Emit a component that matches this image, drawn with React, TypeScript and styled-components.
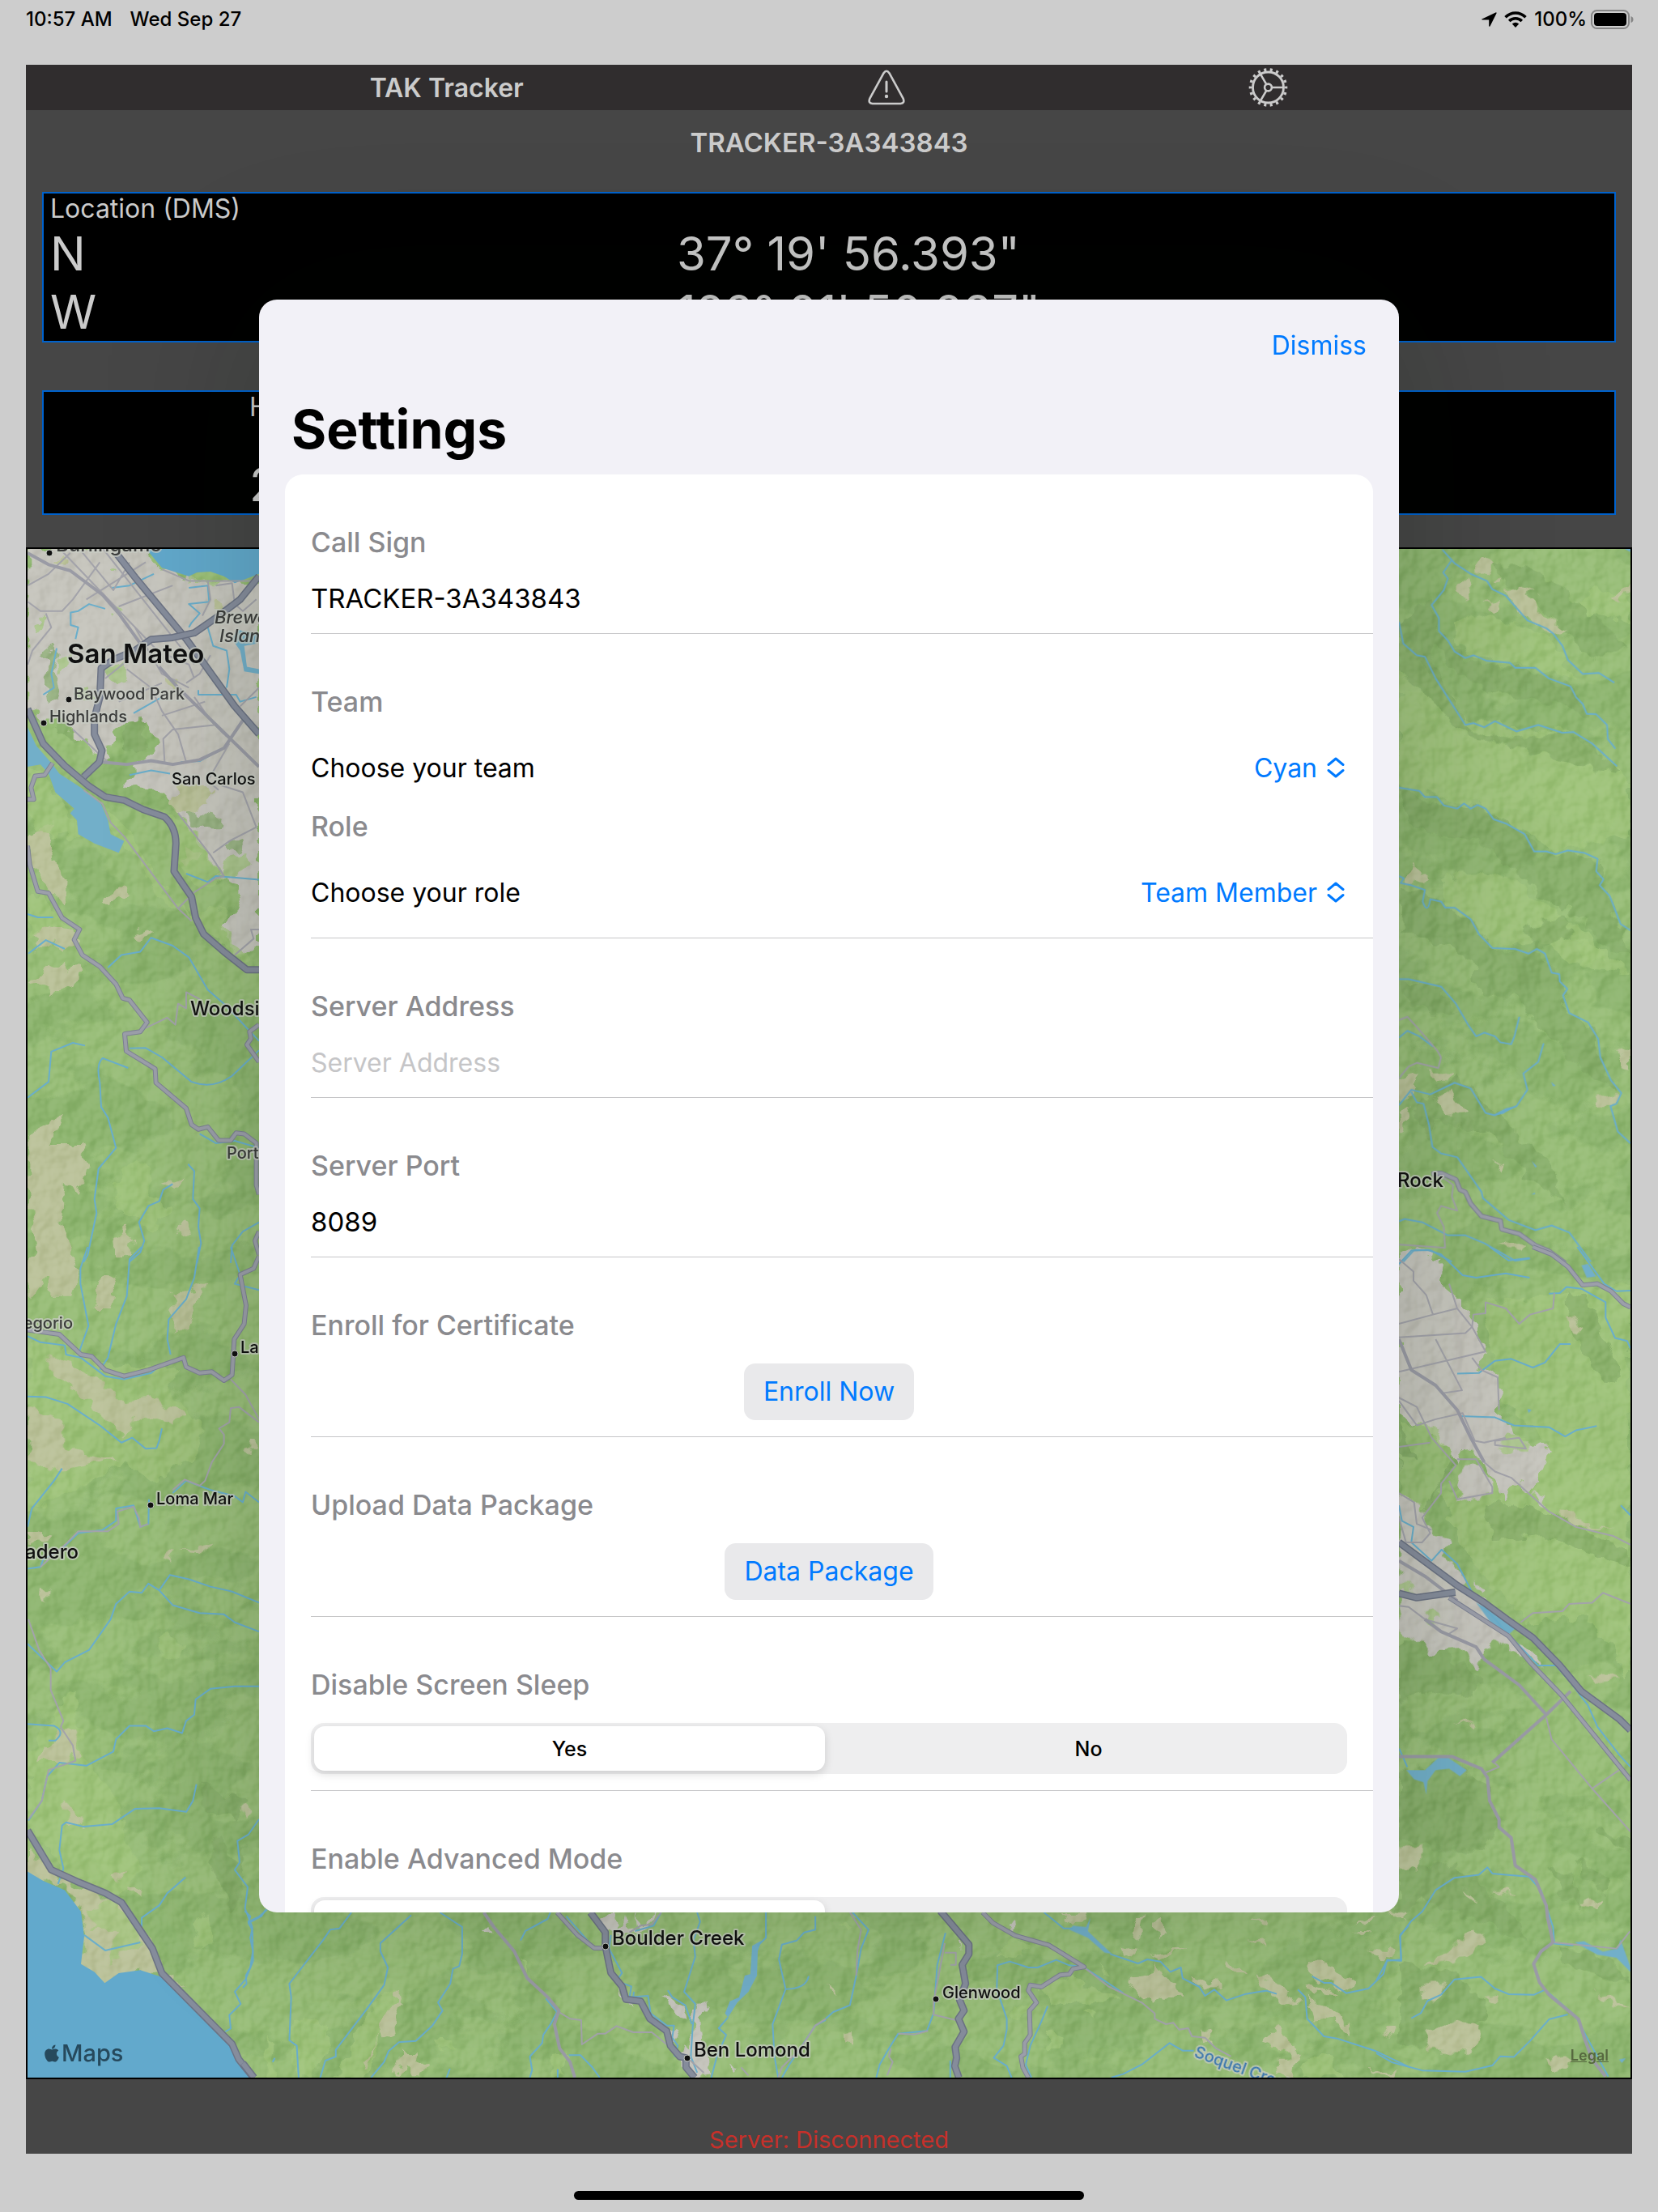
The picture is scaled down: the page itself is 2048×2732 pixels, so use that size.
import React, { useState } from "react";
import styled, { createGlobalStyle } from "styled-components";
import { FaApple } from "react-icons/fa";

const GlobalStyle = createGlobalStyle`
  *, *::before, *::after { box-sizing: border-box; }
  body {
    margin: 0;
    background: #cdcdcd;
    color: #000;
    font-family: Inter, "Liberation Sans", sans-serif;
    font-size: 32px;
  }
  button, input, select { font: inherit; color: inherit; margin: 0; }
`;

const blue = "#007aff";

/* ---------- page frame ---------- */

const Page = styled.div`
  min-height: 100vh;
  display: flex;
  flex-direction: column;
`;

const StatusBar = styled.div`
  display: flex;
  justify-content: space-between;
  align-items: center;
  height: 47px;
  margin-bottom: 33px;
  padding: 0 30px 0 32px;
  font-size: 24px;
  font-weight: 500;
`;

const StatusGroup = styled.div<{ $gap: number }>`
  display: flex;
  align-items: center;
  gap: ${(p) => p.$gap}px;
`;

const Tracker = styled.main`
  flex: 1;
  display: flex;
  flex-direction: column;
  margin: 0 32px;
  background: #464646;
  color: #cbcbcb;
`;

const TitleBar = styled.header`
  display: flex;
  justify-content: space-evenly;
  align-items: center;
  height: 56px;
  background: #302d2e;
`;

const Title = styled.h1`
  margin: 0;
  font-size: 32px;
  font-weight: 600;
`;

const IconButton = styled.button`
  display: flex;
  padding: 0;
  border: 0;
  background: none;
`;

const CallSign = styled.div`
  margin-bottom: 21px;
  line-height: 80px;
  font-size: 33px;
  font-weight: 600;
  text-align: center;
`;

const Panel = styled.section`
  margin: 0 20px;
  border: 2px solid #0062cc;
  background: #000;
`;

const LocationPanel = styled(Panel)`
  padding: 0 8px;
  margin-bottom: 59px;
`;

const StatsPanel = styled(Panel)`
  display: flex;
  justify-content: space-between;
  height: 154px;
  padding: 0 254px;
  margin-bottom: 40px;
`;

const PanelLabel = styled.div`
  line-height: 38px;
  font-size: 32px;
`;

const Reading = styled.div`
  line-height: 72px;
  font-size: 58px;
`;

const Coordinates = styled.div`
  display: flex;
`;

const Column = styled.div<{ $centered?: boolean }>`
  display: flex;
  flex-direction: column;
  justify-content: space-between;
  margin: ${(p) => (p.$centered ? "0 auto" : "0")};
  padding-left: ${(p) => (p.$centered ? "16px" : "0")};
`;

const Footer = styled.footer`
  padding-top: 58px;
  line-height: 34px;
  font-size: 29px;
  color: #c6302a;
  text-align: center;
`;

const HomeArea = styled.div`
  display: flex;
  justify-content: center;
  padding: 46px 0 15px;
`;

const HomeIndicator = styled.div`
  width: 630px;
  height: 11px;
  border-radius: 6px;
  background: #000;
`;

/* ---------- map ---------- */

const MapFrame = styled.div`
  position: relative;
  flex: 1;
  min-height: 600px;
  border: 2px solid #000;
  overflow: hidden;
`;

const MapDrawing = styled.svg`
  position: absolute;
  inset: 0;
  width: 100%;
  height: 100%;
`;

const Relief = styled.rect`
  mix-blend-mode: soft-light;
`;

const MapBrand = styled.div`
  position: absolute;
  left: 18px;
  bottom: 12px;
  display: flex;
  align-items: center;
  gap: 0;
  line-height: 36px;
  font-size: 29px;
  font-weight: 500;
  color: #26495c;
`;

const LegalLink = styled.a`
  position: absolute;
  right: 27px;
  bottom: 15px;
  line-height: 24px;
  font-size: 18px;
  font-weight: 600;
  color: #56683f;
`;

type Kind =
  | "urban" | "tan" | "light" | "dark" | "water" | "sea"
  | "stream" | "street" | "road" | "main" | "highway";

const landFills: Partial<Record<Kind, [string, number]>> = {
  urban: ["#c6c5bd", 1],
  tan: ["#bbc29a", 1],
  light: ["#a2c67e", 0.7],
  dark: ["#84aa69", 0.65],
};

const waterFills: Partial<Record<Kind, [string, number]>> = {
  water: ["#72afc9", 1],
  sea: ["#62a9cc", 1],
};

const strokes: Partial<Record<Kind, [string, number][]>> = {
  stream: [["#6aaecb", 2]],
  street: [["#a3a3aa", 2]],
  road: [["#9a9ba5", 4]],
  main: [["#7d8293", 6], ["#9c9faa", 4]],
  highway: [["#6c7384", 9], ["#868d9c", 6]],
};

interface Tile {
  transform: string;
  shapes: [Kind, string][];
}

const tiles: Tile[] = [
  {
    transform: "translate(0 660) scale(.3333 .574)",
    shapes: [
      ["urban", "M100 30H540L600 75L700 95L960 105V880L930 905L870 905L830 850L885 780L840 735L800 740L780 700L700 630L660 600L650 580L600 550L480 545L460 530L560 470L590 450L540 395L470 400L420 420L400 480L360 480L300 440L230 400L160 400L100 370Z"],
      ["tan", "M200 620L105 640L110 700L150 730L190 770L240 800L245 750L200 700L170 660Z"],
      ["tan", "M180 840L120 860L150 890L200 880L240 895L290 880L270 850Z"],
      ["tan", "M300 930L250 940L230 920L110 960L180 975L160 990L220 995L300 950Z"],
      ["tan", "M385 790L420 768L475 756L480 770L440 785L400 800Z"],
      ["tan", "M480 863L540 850L580 858L520 870Z"],
      ["tan", "M103 1290L230 1250L180 1310L300 1310L330 1360L280 1420L240 1390L230 1480L290 1568H150L103 1400Z"],
      ["tan", "M420 1530L460 1490L500 1520L480 1550L430 1555ZM650 1500L690 1475L710 1500L660 1510ZM590 1395L680 1380L660 1410Z"],
      ["tan", "M680 670L740 690L730 710L680 705ZM640 590L660 540L780 545L770 580L700 600Z"],
      ["tan", "M200 60L240 42L256 50L225 66ZM610 310L660 320L650 335L615 325ZM800 145L830 150L820 185L790 175Z"],
      ["light", "M104 500L180 520L200 560L260 600L300 650L190 650L104 620Z"],
      ["light", "M400 590L480 640L620 780L700 820L620 800L470 670L400 620Z"],
      ["light", "M420 1400L500 1350L570 1360L550 1420L640 1450L560 1500L440 1450Z"],
      ["light", "M104 790L140 770L220 825L290 850L180 840L110 870Z"],
      ["light", "M620 600L690 620L760 660L790 710L820 740L740 760L700 740L660 700L650 640Z"],
      ["light", "M700 820L830 800L860 880L940 920L880 910L800 880Z"],
      ["dark", "M195 240L215 250L200 290L230 330L220 360L180 350L170 310L190 290L150 260Z"],
      ["light", "M215 265L255 250L250 290L215 300ZM390 290L470 280L475 300L440 320L390 310ZM270 340L340 330L350 350L280 350Z"],
      ["light", "M155 170L172 175L150 205L140 205ZM402 80L415 75L425 85L410 88ZM430 155L460 165L445 175L425 168Z"],
      ["dark", "M690 600L740 595L830 615L820 640L760 640L700 615ZM840 665L915 660L890 685L850 680Z"],
      ["dark", "M215 395L280 430L300 440L270 445L200 415ZM480 400L540 395L520 440L550 450L500 470L450 440Z"],
      ["light", "M820 700L910 690L920 710L870 740L810 730Z"],
      ["light", "M700 100L720 80L820 78L870 100L800 104Z"],
      ["sea", "M540 30H960V85L870 105L830 90L780 80L730 82L700 90L600 72Z"],
      ["water", "M102 415L135 455L195 495L220 515L300 545L375 580L400 615L410 645L460 660L440 685L350 665L290 645L285 615L260 600L275 590L205 555L180 515L150 495L102 500Z"],
      ["stream", "M700 115L770 110L775 145L700 150L740 170L710 190L700 200M770 200L790 240L840 250L850 290L840 330M735 335V345H875L890 360L950 350"],
      ["water", "M880 205L960 215L950 235L905 240L915 285L960 290V300L905 295L890 250L860 225Z"],
      ["stream", "M210 245L190 300L200 330L160 345M570 85L480 110L415 115M390 160L330 150L290 165L262 168L262 195L290 200L280 225"],
      ["stream", "M480 518L560 508L630 515M690 730L770 748L800 735L960 743M495 385L600 350M670 490L740 488L780 475"],
      ["stream", "M400 932L450 905L520 898L560 868L640 885L700 910L770 980L830 1010L960 1090"],
      ["stream", "M102 817L140 824H197M105 902L170 873L240 892M102 1212L180 1178L190 1113L270 1094L315 1100"],
      ["stream", "M475 1148L380 1127Q355 1140 370 1180L375 1232L400 1255L430 1320L365 1365L350 1430L358 1460L325 1550L310 1566"],
      ["stream", "M480 1106L540 1105L600 1125L710 1178Q790 1195 860 1165L960 1110M740 1290L800 1310L870 1305L960 1320"],
      ["stream", "M640 1398L605 1410L590 1435L550 1445L515 1480L535 1520L520 1545L480 1565M697 1355L720 1370L715 1430L740 1450L735 1490L745 1525L730 1568M960 1480L900 1500L860 1530L855 1568"],
      ["street", "M103 110L180 85L260 40M103 145L150 165H230L270 140L370 60M220 30L600 260M300 35L420 120L480 60M320 140L540 60M380 30L720 280M440 155L640 110M520 100L700 230M103 280L120 250L190 200L170 170M500 200L600 300L700 330"],
      ["street", "M470 290L560 330L600 380L660 430L690 490M390 310L560 230L680 210M720 310L700 280L620 260M610 490L605 440L640 420L800 410L840 435M780 260L740 300L690 320M440 360L600 320M270 420L400 490M600 390L760 360"],
      ["street", "M310 550L380 580L410 620L460 650L660 805L710 832M660 805L720 770L800 740L830 735L780 690L700 630L660 600M810 550L770 530L800 500L850 450M820 540L900 555L950 630L850 660L790 685M870 905L940 870L930 850L960 850"],
      ["street", "M540 1062L620 1040L650 1055L660 1010L690 1020V985L740 1000"],
      ["street", "M800 110L860 105L870 150L900 165L950 140M750 175L780 140L770 100M600 75L700 100H960M890 370L960 330M720 350L780 400L830 430"],
      ["road", "M102 40L180 65L260 78L380 130L440 170L520 235"],
      ["road", "M590 285L660 330L960 500M380 490L470 495L560 487L640 495L740 485L830 460L900 400"],
      ["main", "M102 570H125L115 545L130 520L165 518L195 492"],
      ["highway", "M102 375L160 450L240 498L330 542L390 565L460 572L530 592L610 608Q652 630 652 665L645 725L710 780L725 825L755 860L830 898L915 937H960"],
      ["highway", "M430 40L500 92L690 225L870 370L960 430"],
      ["highway", "M960 90L890 140L800 180L720 212L640 222L560 226L500 250L420 270L375 288L370 350L350 395V430L378 465L368 490L310 522"],
      ["main", "M102 670L110 710L140 768L180 772L230 825L295 850L275 872L305 905L370 930L430 968L455 998L480 1002L545 1050L520 1070L462 1075L468 1112L575 1150L578 1180L690 1235L710 1270L735 1280L770 1275L810 1304H855L875 1288L905 1290L950 1310V1400L960 1420"],
      ["main", "M960 1055L925 1070L930 1085L915 1098L960 1135M960 1500L945 1520L960 1550"],
    ],
  },
  {
    transform: "translate(0 1540) scale(.3333 .7602)",
    shapes: [
      ["tan", "M150 0L260 0L290 40L270 80L180 80L170 50L103 90V30Z"],
      ["tan", "M370 50L440 40L410 100L350 100ZM640 80L760 60L700 130L640 140Z"],
      ["light", "M103 150L500 200L680 190L620 230L760 300L700 350L560 380L460 350L240 400L103 430Z"],
      ["tan", "M180 170L280 190L460 250L560 245L680 275L640 290L500 275L460 310L370 270L300 240L200 210Z"],
      ["tan", "M103 260L220 280L240 330L340 340L430 345L330 355L240 365L103 350Z"],
      ["tan", "M103 460L190 465L150 480L103 478ZM140 550L185 560L180 578L150 570ZM615 490L640 485L630 515L612 510ZM670 492L800 482L740 498Z"],
      ["light", "M103 820L230 740L270 720L310 830L440 900L460 960L520 1010L440 1060L250 1020L103 940Z"],
      ["tan", "M220 780L280 790L300 825L240 835L150 835L160 810L200 810ZM235 895L310 935L250 935ZM480 1030L520 1045L510 1060L475 1040ZM410 1020L460 1015L450 1027Z"],
      ["tan", "M925 310L955 305L950 335L920 325ZM888 905L940 915L920 935Z"],
      ["tan", "M103 980L200 1015L300 1045L450 1065L560 1130L600 1178L700 1200L640 1195L530 1175L440 1180L390 1198L300 1165L310 1080L240 1040L103 1020Z"],
      ["light", "M320 1075L400 1060L520 1100L540 1130L400 1160L450 1110L340 1110Z"],
      ["light", "M580 640L620 625L690 645L660 670L600 665ZM710 1100L770 1080L780 1130L740 1140Z"],
      ["dark", "M900 960L880 1000L800 960L780 1000L860 1080L900 1060ZM740 870L900 900L880 930L760 920Z"],
      ["sea", "M102 1015L160 1030L240 1045L300 1080L312 1120L300 1165L350 1178L388 1196L440 1180L520 1175L610 1188L700 1220L860 1295L890 1330L940 1350H102Z"],
      ["tan", "M850 1290L880 1300L890 1325L870 1315Z"],
      ["stream", "M325 0L298 35V60L328 128L290 175M525 0L480 20L470 80L430 125L400 180L370 200M738 0L720 50L690 85L625 118L620 150L632 175M855 0L890 45L870 60L960 70"],
      ["stream", "M102 145L150 155L240 160L245 175L300 180L390 210L460 215L560 205L600 190"],
      ["stream", "M102 243L170 244L250 255L370 290L450 318L490 310L540 328L580 327L590 315L600 295M102 455L118 425L200 380L230 360"],
      ["stream", "M103 523L150 520L160 508L230 490L290 465L380 460L430 445V425L495 420L520 455L550 450L552 410M640 400L690 380L780 395L870 405L900 415L910 398L960 415"],
      ["stream", "M102 645L210 690L240 675L330 655L410 605L430 580L480 560L525 562L550 547L590 558L630 533L700 540L780 552L860 560L960 578M590 558L640 582L740 595L830 597L870 610L960 625"],
      ["stream", "M102 775L200 778Q245 788 205 802H180M105 932L155 900L175 860L220 838L320 843L420 820L430 800L480 778H540L570 787L620 782L675 790L690 770L720 760L725 735L780 718L870 714H960"],
      ["stream", "M215 1035L235 1010L220 980L230 940L245 935L310 942L415 938L500 913L590 912L690 918L715 900L728 873"],
      ["stream", "M688 1024L620 1050L590 1070L525 1090V1105M312 1118L390 1143L520 1130"],
      ["stream", "M960 930L920 955L880 965L888 1000L870 1012L918 1040L908 1075L935 1105L938 1160L910 1190L870 1210L892 1230L850 1248L855 1270L835 1275M918 1097L960 1088L990 1077"],
      ["street", "M105 605L145 655L188 685V720L235 770L225 780L270 810L280 835L180 850L155 900L105 930M150 520L250 480L290 462L400 462L440 450L435 430L495 422L515 440L520 455L550 450"],
      ["street", "M640 395L685 378L740 388L760 380L785 350L830 320V305L812 295L850 285L855 262L885 260L960 285M855 215L910 240L960 280"],
      ["main", "M102 135L220 142L300 175L340 178L390 200L460 210L550 200L680 180L690 195L740 205L785 203L830 217L860 208L868 150L905 125L912 95L890 45L940 35L960 15"],
      ["highway", "M102 948L190 1012L290 1032L390 1050L450 1065L565 1140L600 1180L860 1295L885 1320L940 1350"],
    ],
  },
  {
    transform: "translate(1700 660) scale(.3333 .574)",
    shapes: [
      ["light", "M84 210L160 270L230 330L330 400L440 400L520 420L700 420L900 500L942 540V650L820 660L640 680L560 640L420 610L380 580L240 570L84 540Z"],
      ["light", "M290 190L380 170L560 200L640 220L740 310L600 290L500 280L380 265L300 240Z"],
      ["light", "M240 740L420 720L560 760L700 830L780 850L850 920L700 930L640 880L430 890L360 830L260 795Z"],
      ["light", "M700 180L860 170L942 200V130L800 120ZM740 870L860 900L940 940L780 930Z"],
      ["dark", "M84 200L150 150L200 150L240 210L330 270L400 275L500 290L600 300L720 330L780 390L700 370L560 350L420 340L300 300L220 240L190 260L300 370L340 420L520 440L700 425L800 450L910 515L760 495L560 465L320 430L200 350L84 290Z"],
      ["dark", "M84 550L240 580L400 590L560 650L600 685L820 700L850 770L942 900L850 890L770 830L620 780L500 720L380 660L140 640Z"],
      ["dark", "M84 760L180 770L270 805L350 830L430 890L620 905L680 950L710 1030L800 1060L850 1150L890 1200L780 1160L600 1060L500 990L380 990L360 920L240 880L100 860Z"],
      ["dark", "M420 60L560 70L700 120L850 200L940 240L800 270L720 220L620 160L480 110Z"],
      ["dark", "M300 1160L420 1230L520 1290L640 1350L700 1440L560 1380L420 1290L220 1260L200 1310L130 1240Z"],
      ["dark", "M84 960L240 975L300 1030L200 1030L84 990ZM540 850L700 820L720 860L600 890Z"],
      ["tan", "M365 75L400 48L430 60L390 82ZM295 120L340 92L355 110L330 140ZM400 150L450 145L465 160L440 172ZM430 95L465 98L460 108Z"],
      ["tan", "M480 120L520 108L600 125L550 130L600 160L660 185L715 200L650 212L580 190L530 165Z"],
      ["tan", "M875 135L942 105V125L900 145ZM112 745L140 705L165 730L200 745L170 755ZM895 1110L942 1100V1150L915 1145Z"],
      ["tan", "M84 1175L140 1162L155 1190L84 1215ZM190 1150L280 1158L240 1180ZM215 1215L275 1200L330 1240L250 1245ZM800 1215L895 1205L880 1230L820 1230ZM84 1250L125 1230L100 1285H84ZM435 1350L470 1355L460 1375ZM455 1530L540 1525L535 1545Z"],
      ["stream", "M245 33L290 62L350 85L410 100L430 118L480 132L560 185L630 202L655 213L690 240L710 270L765 300L825 298L882 319"],
      ["stream", "M280 55L248 82L265 95L250 120L205 152L232 180V208L265 228L290 252L330 266L360 260L410 272L495 276L515 287H590L640 310L720 327L740 350L765 365L780 386L815 387L855 410L858 440L886 461"],
      ["stream", "M84 188L100 235L150 260L180 263L220 310L330 410L360 406L400 415L440 402L520 424L600 410L690 427L730 425L800 450L892 499"],
      ["stream", "M84 545L160 552L180 565H225L250 583L300 590L325 579L350 590L375 582L405 590L435 613L480 622L550 645L585 682H630L665 688L710 680L770 685L820 698L815 725L842 742L828 755L865 778L905 838L942 852"],
      ["stream", "M84 735L102 740L90 750L130 755L180 765L172 790Q190 820 200 785L240 790L255 803H290L350 828L380 860L430 890L515 892L565 902L595 892L625 902L650 943L678 946L680 962L708 978L692 992L715 1030L785 1050L822 1085L830 1125L870 1175L908 1202L890 1225L868 1230L895 1285L942 1310"],
      ["stream", "M84 957H120L240 973L295 1010L340 1055L370 1080L400 1072L440 1080L460 1093L500 1097L512 1080L530 1038M84 1083L115 1068L160 1080L210 1102"],
      ["stream", "M84 1228L130 1195L200 1205L290 1180L350 1192L405 1245L440 1250L520 1230L560 1195L545 1160L600 1135L620 1095"],
      ["stream", "M130 1200L150 1222L175 1225L195 1270L208 1318L240 1332L300 1340L390 1415L395 1428L460 1460L490 1475L590 1497L650 1487L715 1502L795 1565"],
      ["stream", "M84 1478L105 1473L170 1480L265 1508H330L400 1525L515 1563L570 1558M100 1565L140 1540L200 1540L280 1565"],
      ["water", "M430 1250L480 1235L515 1230L470 1247ZM575 1347L595 1360L590 1363ZM575 1420L588 1416V1420ZM648 1178L665 1186L655 1188ZM920 31H942V38Z"],
      ["street", "M84 1045L115 1038L150 1060L225 1110L240 1125L230 1148L150 1137L120 1145L84 1170M205 1375L250 1385L285 1400L280 1425L300 1455L240 1445L225 1460L250 1490L255 1535L84 1528"],
      ["main", "M205 1376L240 1374L295 1388L310 1410L330 1415L350 1440L390 1467L460 1477L465 1495L530 1505L590 1530L640 1542L700 1568"],
    ],
  },
  {
    transform: "translate(1700 1540) scale(.3333 .7602)",
    shapes: [
      ["light", "M400 90L942 60V700L780 600L560 610L330 500L240 400L420 380L600 380L640 320L450 240Z"],
      ["dark", "M84 640L220 640L300 680L400 700L350 730L200 720L84 740ZM84 850L300 840L420 880L460 940L400 980L240 980L84 960Z"],
      ["dark", "M710 70L790 90L840 150L910 210L860 225L780 180L720 130Z"],
      ["dark", "M84 1010L300 1000L500 1080L560 1130L360 1090L160 1060L84 1090ZM670 1140L800 1140L940 1190L850 1190L700 1165Z"],
      ["dark", "M650 1005L740 1030L760 1070L700 1060ZM740 990L860 1030L850 1050L760 1020ZM820 945L942 965V980L820 955ZM84 1160L300 1180L420 1240L320 1290L84 1300Z"],
      ["dark", "M84 290L200 300L300 350L240 390L180 430L84 400ZM400 410L640 430L942 500L940 520L620 470L420 480Z"],
      ["urban", "M84 10L130 0L250 20L240 60L330 95L390 160L420 170L370 190L460 205L455 280L500 285L510 310L650 325L600 380L570 395L520 385L470 410L420 360L350 330L320 320L300 350L200 300L84 270Z"],
      ["light", "M84 285L200 290L280 340L240 380L170 430L84 400L90 340L160 345L120 320Z"],
      ["urban", "M84 400L150 415L200 460L280 480L240 500L310 530L350 560L420 590L480 620L500 635L600 670L640 690L560 670L440 640L390 660L370 680L300 655L210 660L150 640L84 630ZM340 350L420 370L430 400L310 415L300 390ZM575 400L640 405L630 418ZM360 540L410 555L390 565Z"],
      ["light", "M480 310H555V330H440ZM170 600L205 590L240 600L210 612ZM84 545L130 545L140 560L84 560Z"],
      ["tan", "M660 430L710 425L800 455L885 460L780 460L700 445ZM705 110L765 128L750 140L720 135ZM780 700L860 695L920 702L840 706ZM84 975L165 975L160 1015L84 1010ZM290 768L370 775L350 780Z"],
      ["tan", "M180 1165L370 1110L410 1130L330 1155L220 1165ZM172 1195L250 1195L240 1215L175 1230ZM180 1280L310 1255L390 1270L350 1310L200 1305ZM400 1220L460 1215L430 1232ZM320 1040L380 1060L340 1058ZM430 1048L510 1045L480 1055ZM750 1065L830 1060L820 1075ZM810 1210L940 1235L900 1235L820 1222ZM620 1325L720 1320L710 1330L640 1332ZM25 1275L70 1272L50 1285ZM40 1075L115 1080L100 1092Z"],
      ["water", "M112 850L180 850L230 830L260 828L335 850L310 860L270 848L220 850L190 868L185 890L175 870L140 865ZM760 30L785 28L815 48L780 50ZM370 578L420 590L515 620L490 630L440 620ZM735 1130L770 1128L840 1145L895 1140L905 1125L942 1170V1178L890 1155L820 1150ZM560 263L575 265L565 270ZM900 1320L925 1318L910 1326Z"],
      ["stream", "M84 28L130 6L190 5L240 12L320 46L370 50L480 43L568 50M420 0L490 22L568 18M745 0L845 60L890 72L942 71M640 76L680 75L705 65L760 68L850 90V115L885 148L930 153L942 165"],
      ["stream", "M300 206L380 205L440 185L500 182L580 196L625 188L680 158L720 158M310 275L440 277L510 290L640 293L700 308L740 298L817 291M906 420L942 436"],
      ["stream", "M84 420L95 445L138 455L130 480L205 510L242 492L300 515L360 565L480 625L600 680L665 680L715 705L785 745L820 780L900 825L942 845"],
      ["stream", "M0 1192L40 1160L92 1158L88 1120L130 1095L170 1080L220 1045L290 1025L380 1020L412 1008L430 1018L480 1020L565 1023L610 1045L655 1105L660 1132L730 1135"],
      ["stream", "M130 1253L165 1245L190 1225L240 1215L290 1190L388 1186L440 1205L490 1214L585 1215L625 1207L740 1250L775 1280L860 1348M0 1310L60 1325L170 1338L330 1340L430 1330L460 1315L510 1316L570 1290L640 1255L710 1247M85 815L115 845"],
      ["street", "M84 20L138 40V55L185 78L210 110L84 125M210 110L300 100L355 130L330 140L84 147M355 130L405 170L84 203M355 180L390 200L450 212L455 265M300 100L270 60M84 150L130 200M220 150L318 233L240 238M440 315L530 310L555 328L440 322Z"],
      ["street", "M355 130L360 110L405 108V90L480 100L530 125L570 110L655 100L660 75M84 250L150 290L220 280L320 270L365 315L400 318L480 310M84 325L200 318M270 380L300 410L430 400V390L370 345L300 345M84 400L140 415L150 450L205 460M84 440L110 480H170L200 465L170 440L240 400V385L295 355L205 310L150 260L84 245"],
      ["street", "M535 610L580 595L690 592L715 580L800 578L840 562L942 580M400 350L440 365L500 375L640 430L740 455L880 470L942 484M84 583L120 585L180 605L300 620L265 630M630 765L650 800L800 880L942 950M800 880L900 850M430 835L455 845L400 855M655 1130L890 1140L940 1112"],
      ["road", "M84 150L130 200L220 225L300 265L350 310L400 350M84 510L180 535L270 565L300 575M180 605L240 625L370 650L400 670L530 712L630 760M430 838L630 760L720 722"],
      ["road", "M84 828H280L390 848L412 862L420 900L455 930V943L500 960L515 1005L590 1028L630 1070L635 1090L655 1130L610 1145L583 1165L605 1195L640 1215L750 1255L775 1290L800 1320L850 1348"],
      ["main", "M580 0L650 12L710 32L765 62L820 60L870 72L915 92L942 98"],
      ["main", "M270 570L490 632L570 675L690 730L942 866"],
      ["highway", "M84 563L150 570L293 561"],
      ["highway", "M84 480L300 550L400 578L490 607L580 635L680 680L760 722L900 767L942 785"],
    ],
  },
  {
    transform: "translate(300 2350) scale(.4592 .3333)",
    shapes: [
      ["light", "M135 430L170 415L230 470L235 530L210 580L190 648H150L130 530ZM375 330L410 310L420 350L370 480L340 640L250 648L290 560L300 500ZM510 505L570 510L575 540L540 545ZM830 560L870 550L860 648H830ZM740 195L770 250L765 265ZM60 500L85 520L80 600L100 648H60Z"],
      ["tan", "M405 320L425 318L410 370L422 380L405 430L410 490L380 505L365 480L330 620L320 620L345 540L375 440L405 370Z"],
      ["tan", "M430 548L470 550L465 590L500 600L485 640L460 640L440 610L400 648L420 600Z"],
      ["urban", "M965 60L990 35L1000 100L1020 90L1025 40L1040 90L1060 100L1055 40L1080 80L1115 35L1100 90L1050 110L980 120ZM640 115L660 80L675 115ZM1130 345L1170 360L1205 440L1190 440L1150 390ZM1215 390L1250 385L1230 420L1240 590L1270 640L1210 648L1170 600L1180 520L1205 540ZM1140 460L1160 460L1170 530L1150 520ZM1005 310L1020 350L1050 380L1020 370ZM1310 595L1330 600L1320 615ZM985 180L1000 230L985 230Z"],
      ["water", "M1370 160L1395 140L1385 180L1383 270L1360 330L1330 370L1305 425L1297 410L1310 365L1335 350L1350 270L1365 265Z"],
      ["stream", "M5 30L20 50L15 75L25 100L20 130L27 180L20 240L8 270L10 300L0 315M15 75L50 50L62 25"],
      ["stream", "M292 36L260 95L235 100L215 140L125 300L130 350L125 510L145 530L150 648M453 46L370 150V180L390 240L380 305L330 400L250 545V570L222 585L208 648"],
      ["stream", "M530 36L590 90V190L582 235L565 245L558 300L525 370L537 400L510 455L465 512L420 517L392 550L380 590L345 648M827 36L820 60L780 90L760 105L747 140"],
      ["stream", "M815 355L845 405L830 445L808 490L805 520L772 570L778 620L772 648M877 565H908L940 610L960 648M80 590L86 575M557 615L548 648M847 617V648"],
      ["stream", "M990 120L985 170L1020 260L1005 290L1045 310L1040 350L1090 345L1097 410L1140 455H1160L1155 500L1170 530L1160 570M1125 36L1105 85L1055 105M870 50L940 160M1052 330L1050 350"],
      ["stream", "M1222 36L1230 70L1212 140L1217 200L1187 330L1217 375L1210 460L1205 570L1222 630M1143 325L1155 350L1190 380L1208 450M1407 36V130L1385 160M1305 425L1280 465L1300 490L1275 570L1260 648"],
      ["stream", "M1540 50V100L1510 110L1490 140L1450 155L1442 210L1450 260L1460 320L1425 450L1430 570L1440 648M1460 320Q1515 320 1522 272M1568 435L1540 455L1470 600L1450 648"],
      ["street", "M1568 430L1540 455L1500 540L1450 610L1440 648M1340 610L1360 640M1200 580L1240 630"],
      ["street", "M850 405L880 430L910 435L912 525L955 485H975L1005 457L1050 480H1100L1140 525M1125 36L1100 80L1070 85L1040 110"],
      ["road", "M648 36L675 90L730 180L765 280L820 350L850 400L838 450L852 540L880 590L893 648"],
      ["main", "M845 36L900 120L945 168H975"],
      ["highway", "M935 36L975 110V160L990 260L1020 310L1030 358L1070 365L1095 430L1140 475L1150 530L1175 570L1192 575V610L1215 648"],
      ["highway", "M0 595L30 648"],
    ],
  },
  {
    transform: "translate(1020 2350) scale(.4592 .3333)",
    shapes: [
      ["light", "M460 160L500 130L535 150L525 210L460 200ZM580 320L620 280L680 290L750 330L800 360L700 370L640 360L600 370ZM500 390L545 385L540 410L510 415ZM730 225L765 270L740 260ZM1290 580L1350 570L1390 640L1280 648ZM600 470L640 500L640 540L590 540ZM690 400L720 395L720 430ZM45 70L70 80L60 115Z"],
      ["tan", "M640 36H710L690 80L660 80ZM840 50L860 40L855 110L825 130ZM905 50L915 80L895 140L890 90ZM800 165L840 170L830 195L810 190ZM870 200L930 175L970 165L900 210Z"],
      ["tan", "M820 290L870 270L885 220L905 280L945 300L955 350L900 350L885 375L840 340ZM975 270L1070 300L1060 310L1000 300ZM1075 235L1110 235L1130 260L1105 270ZM1160 270L1230 310L1280 390L1220 370L1200 330Z"],
      ["tan", "M1300 225L1350 235L1420 290L1410 320L1330 290L1295 260ZM1290 300L1380 330L1370 345L1300 320ZM1300 340L1360 400L1410 450L1405 495L1370 430L1310 440ZM1215 440L1235 500L1260 550L1200 545L1180 500L1205 480ZM1240 550L1270 545L1255 640L1215 640L1210 590L1240 590ZM1450 625L1540 625L1535 645ZM1500 460L1530 460L1525 500L1505 490ZM1415 80L1480 50L1470 75ZM1415 105L1465 105L1450 118ZM1450 170L1530 180L1530 205L1480 195ZM1145 130L1185 160L1160 165ZM1520 36L1568 70L1540 60ZM50 485L70 480V530L50 520ZM0 310L30 345L0 330ZM1010 465L1045 520L1015 520ZM1145 65L1180 50L1185 80Z"],
      ["urban", "M485 95L500 65L505 105ZM355 130L375 170L360 155Z"],
      ["water", "M655 100L665 85L700 90L712 55L705 105L735 145L770 190L750 185L705 130Z"],
      ["stream", "M72 36L115 100L95 170L82 270L65 380L20 405L0 430M322 112L300 230L290 410L272 475L195 485L170 540L145 600L136 648"],
      ["stream", "M695 238L655 232L620 212L570 240H545L495 218L462 232L460 320L487 430V470L478 530L452 575L487 605L500 648M597 383L580 440L550 530L538 600L553 648M335 585V648"],
      ["stream", "M587 36L640 95H665M765 190L840 225L865 210L900 218L927 256L955 240L960 280L1005 312L1020 345L1045 322L1078 362L1130 338L1185 326L1213 338"],
      ["stream", "M700 245L740 280L800 335M768 648L800 635L850 600L925 520L960 548H990M1270 322L1290 350L1295 430L1340 495L1375 503L1480 550L1568 608"],
      ["stream", "M1308 273L1340 297H1360L1400 335L1460 318L1500 265L1510 212L1548 215L1545 120L1568 85"],
      ["street", "M65 36L95 100L85 180L82 270M320 150L290 370V415L350 435M320 185H350V230H335M195 485L240 488L275 475M175 540L170 570L180 590L165 640"],
      ["street", "M695 240L760 310L850 370L885 410V430L915 450L935 445L950 470L975 465L985 495L1020 500L1050 540L1090 570"],
      ["main", "M422 36L450 75L510 122L600 157L695 238L665 245L655 265L630 268L580 312L550 305L545 325L567 370L548 400L550 490L535 520V560L525 570L530 610L545 648"],
      ["highway", "M308 30L385 155V190L367 230L376 300L360 360L372 400L357 430L372 478L348 535L352 575L347 605L358 648"],
    ],
  },
];

type LabelTone = "city" | "town" | "faint" | "creek";

interface PlaceLabel {
  text: string;
  x: number;
  y: number;
  size: number;
  tone?: LabelTone;
  end?: boolean;
  dot?: [number, number];
  angle?: number;
}

const places: PlaceLabel[] = [
  { text: "Burlingame", x: 69, y: 681, size: 24, tone: "faint", dot: [61, 683] },
  { text: "San Mateo", x: 83, y: 819, size: 33, tone: "city" },
  { text: "Baywood Park", x: 91, y: 864, size: 20, tone: "faint", dot: [85, 864] },
  { text: "Highlands", x: 61, y: 892, size: 20, tone: "faint", dot: [54, 893] },
  { text: "San Carlos", x: 212, y: 969, size: 20 },
  { text: "Woodside", x: 235, y: 1254, size: 24 },
  { text: "Portola Valley", x: 280, y: 1431, size: 20, tone: "faint" },
  { text: "San Gregorio", x: 90, y: 1641, size: 20, tone: "faint", end: true },
  { text: "La Honda", x: 297, y: 1671, size: 20, dot: [290, 1672] },
  { text: "Loma Mar", x: 193, y: 1858, size: 20, dot: [186, 1859] },
  { text: "Pescadero", x: 97, y: 1925, size: 24, end: true },
  { text: "Alum Rock", x: 1783, y: 1466, size: 24, end: true },
  { text: "Boulder Creek", x: 756, y: 2402, size: 24, dot: [748, 2404] },
  { text: "Ben Lomond", x: 857, y: 2540, size: 24, dot: [849, 2542] },
  { text: "Glenwood", x: 1164, y: 2468, size: 20, dot: [1156, 2469] },
  { text: "Soquel Creek", x: 1474, y: 2540, size: 20, tone: "creek", angle: 20 },
];

const PlaceText = styled.text<{ $tone: LabelTone; $size: number }>`
  font-size: ${(p) => p.$size}px;
  font-weight: ${(p) => (p.$tone === "city" ? 600 : 500)};
  fill: ${(p) => (p.$tone === "faint" ? "#3c3d3c" : p.$tone === "creek" ? "#3d78ae" : "#111")};
  stroke: rgba(200, 204, 196, 0.75);
  stroke-width: 4px;
  stroke-linejoin: round;
  paint-order: stroke;
`;

const WaterLabel = styled(PlaceText)`
  font-style: italic;
`;

function FillLayer({ palette }: { palette: Partial<Record<Kind, [string, number]>> }) {
  return (
    <>
      {tiles.map((tile) => (
        <g key={tile.transform} transform={tile.transform}>
          {tile.shapes.map(([kind, d]) => {
            const paint = palette[kind];
            return paint ? <path key={d} d={d} fill={paint[0]} opacity={paint[1]} /> : null;
          })}
        </g>
      ))}
    </>
  );
}

function LineLayer() {
  return (
    <>
      {tiles.map((tile) => (
        <g key={tile.transform} transform={tile.transform} fill="none" strokeLinejoin="round">
          {tile.shapes.map(([kind, d]) =>
            (strokes[kind] ?? []).map(([color, width]) => (
              <path key={d + width} d={d} stroke={color} strokeWidth={width} vectorEffect="non-scaling-stroke" />
            ))
          )}
        </g>
      ))}
    </>
  );
}

function MapView() {
  const area = { x: 34, y: 678, width: 1980, height: 1888 };
  return (
    <MapDrawing viewBox="34 678 1980 1888" preserveAspectRatio="xMidYMid slice" aria-label="Map">
      <defs>
        <filter id="woods" x="0" y="0" width="100%" height="100%" colorInterpolationFilters="sRGB">
          <feTurbulence type="fractalNoise" baseFrequency="0.007 0.012" numOctaves="5" seed="8" />
          <feColorMatrix values="0 0 0 0 .53  0 0 0 0 .69  0 0 0 0 .42  24 0 0 0 -11.6" />
        </filter>
        <filter id="relief" x="0" y="0" width="100%" height="100%" colorInterpolationFilters="sRGB">
          <feTurbulence type="fractalNoise" baseFrequency="0.035 0.035" numOctaves="3" seed="21" />
          <feDiffuseLighting surfaceScale="10" diffuseConstant="0.75" lightingColor="#fff">
            <feDistantLight azimuth="215" elevation="42" />
          </feDiffuseLighting>
        </filter>
        <filter id="ragged" filterUnits="userSpaceOnUse" {...area} colorInterpolationFilters="sRGB">
          <feTurbulence type="fractalNoise" baseFrequency="0.06" numOctaves="2" seed="4" result="noise" />
          <feDisplacementMap in="SourceGraphic" in2="noise" scale="22" xChannelSelector="R" yChannelSelector="G" />
        </filter>
      </defs>
      <rect {...area} fill="#99be79" />
      <rect {...area} filter="url(#woods)" opacity=".5" />
      <g filter="url(#ragged)">
        <FillLayer palette={landFills} />
      </g>
      <Relief {...area} filter="url(#relief)" opacity=".22" />
      <FillLayer palette={waterFills} />
      <LineLayer />
      <WaterLabel $tone="faint" $size={22} x="265" y="770">Brewer</WaterLabel>
      <WaterLabel $tone="faint" $size={22} x="271" y="793">Island</WaterLabel>
      {places.map((p) => (
        <g key={p.text}>
          {p.dot && <circle cx={p.dot[0]} cy={p.dot[1]} r="4" fill="#111" stroke="#c8ccc4" strokeWidth="1" />}
          <PlaceText
            $tone={p.tone ?? "town"}
            $size={p.size}
            x={p.x}
            y={p.y}
            textAnchor={p.end ? "end" : "start"}
            transform={p.angle ? `rotate(${p.angle} ${p.x} ${p.y})` : undefined}
          >
            {p.text}
          </PlaceText>
        </g>
      ))}
    </MapDrawing>
  );
}

/* ---------- settings sheet ---------- */

const Overlay = styled.div`
  position: fixed;
  inset: 0;
  display: flex;
  padding: 370px 320px;
`;

const Sheet = styled.div`
  flex: 1;
  display: flex;
  flex-direction: column;
  overflow: hidden;
  border-radius: 22px;
  background: #f2f1f7;
  box-shadow: 0 0 200px rgba(8, 18, 0, 0.2);
`;

const SheetBar = styled.div`
  display: flex;
  justify-content: flex-end;
  align-items: center;
  height: 112px;
  padding: 0 40px;
`;

const Dismiss = styled.button`
  padding: 0;
  border: 0;
  background: none;
  color: ${blue};
`;

const SheetTitle = styled.h2`
  margin: 0 0 8px;
  padding: 0 40px;
  line-height: 96px;
  font-size: 66px;
  font-weight: 700;
`;

const SheetBody = styled.div`
  flex: 1;
  min-height: 0;
  padding: 0 32px;
  overflow: hidden;
`;

const Card = styled.form`
  padding-left: 32px;
  border-radius: 22px;
  background: #fff;
`;

const Group = styled.fieldset`
  display: flex;
  flex-direction: column;
  margin: 0;
  min-width: 0;
  padding: 62px 32px 20px 0;
  border: 0;
  border-bottom: 1px solid #c6c6c8;
`;

const GroupLabel = styled.label`
  display: block;
  margin-bottom: 25px;
  line-height: 44px;
  font-size: 34px;
  font-weight: 500;
  color: #8a8a8e;
`;

const TextField = styled.input`
  width: 100%;
  height: 44px;
  margin-bottom: 1px;
  padding: 0;
  border: 0;
  outline: 0;
  background: none;
  font-size: 33px;
  &::placeholder { color: #c5c5c7; opacity: 1; font-size: 32px; }
`;

const PickerRow = styled.div<{ $spaced?: boolean }>`
  display: flex;
  align-items: center;
  height: 70px;
  margin-bottom: ${(p) => (p.$spaced ? 15 : 0)}px;
  padding-bottom: 2px;
`;

const PickerLabel = styled.label`
  flex: 1;
`;

const Picker = styled.select`
  width: 320px;
  height: 60px;
  margin-right: 12px;
  padding: 0;
  border: 0;
  outline: 0;
  appearance: none;
  background: none;
  color: ${blue};
  text-align: right;
  text-align-last: right;
`;

const PickerArrows = styled.svg`
  margin-right: 3px;
  pointer-events: none;
`;

const ActionButton = styled.button`
  align-self: center;
  height: 70px;
  padding: 0 24px 2px;
  border: 0;
  border-radius: 14px;
  background: #e9e9eb;
  color: ${blue};
`;

const Segments = styled.div`
  display: flex;
  gap: 10px;
  height: 63px;
  padding: 4px;
  border-radius: 16px;
  background: #eeeeef;
`;

const Segment = styled.label`
  flex: 1;
  display: flex;
  align-items: center;
  justify-content: center;
  border-radius: 13px;
  font-size: 25px;
  font-weight: 500;
  &:has(input:checked) {
    background: #fff;
    box-shadow: 0 4px 12px rgba(0, 0, 0, 0.14);
  }
`;

const HiddenRadio = styled.input`
  position: absolute;
  width: 1px;
  height: 1px;
  opacity: 0;
`;

function UpDown() {
  return (
    <PickerArrows width="22" height="26" viewBox="0 0 22 26" fill="none" stroke={blue} strokeWidth="3" strokeLinecap="round" strokeLinejoin="round">
      <path d="M2 9.5L11 2l9 7.5M2 16.5L11 24l9-7.5" />
    </PickerArrows>
  );
}

function Choice({ name, label }: { name: string; label: string }) {
  const [value, setValue] = useState("Yes");
  return (
    <Group>
      <GroupLabel as="div" id={`${name}-label`}>{label}</GroupLabel>
      <Segments role="radiogroup" aria-labelledby={`${name}-label`}>
        {["Yes", "No"].map((option) => (
          <Segment key={option}>
            <HiddenRadio type="radio" name={name} checked={value === option} onChange={() => setValue(option)} />
            {option}
          </Segment>
        ))}
      </Segments>
    </Group>
  );
}

function Field({ id, label, value, placeholder }: { id: string; label: string; value?: string; placeholder?: string }) {
  return (
    <Group>
      <GroupLabel htmlFor={id}>{label}</GroupLabel>
      <TextField id={id} defaultValue={value} placeholder={placeholder} />
    </Group>
  );
}

function Settings() {
  return (
    <Overlay>
      <Sheet role="dialog" aria-labelledby="settings-title">
        <SheetBar>
          <Dismiss type="button">Dismiss</Dismiss>
        </SheetBar>
        <SheetTitle id="settings-title">Settings</SheetTitle>
        <SheetBody>
          <Card>
            <Field id="call-sign" label="Call Sign" value="TRACKER-3A343843" />
            <Group>
              <GroupLabel as="div">Team</GroupLabel>
              <PickerRow $spaced>
                <PickerLabel htmlFor="team">Choose your team</PickerLabel>
                <Picker id="team"><option>Cyan</option></Picker>
                <UpDown />
              </PickerRow>
              <GroupLabel as="div">Role</GroupLabel>
              <PickerRow>
                <PickerLabel htmlFor="role">Choose your role</PickerLabel>
                <Picker id="role"><option>Team Member</option></Picker>
                <UpDown />
              </PickerRow>
            </Group>
            <Field id="server-address" label="Server Address" placeholder="Server Address" />
            <Field id="server-port" label="Server Port" value="8089" />
            <Group>
              <GroupLabel as="div">Enroll for Certificate</GroupLabel>
              <ActionButton type="button">Enroll Now</ActionButton>
            </Group>
            <Group>
              <GroupLabel as="div">Upload Data Package</GroupLabel>
              <ActionButton type="button">Data Package</ActionButton>
            </Group>
            <Choice name="sleep" label="Disable Screen Sleep" />
            <Choice name="advanced" label="Enable Advanced Mode" />
          </Card>
        </SheetBody>
      </Sheet>
    </Overlay>
  );
}

/* ---------- icons ---------- */

function WarningIcon() {
  return (
    <svg width="46" height="44" viewBox="0 0 46 44" fill="none" stroke="#cbcbcb" strokeWidth="2.6" strokeLinecap="round" strokeLinejoin="round">
      <path d="M19.6 4.2Q23-.8 26.4 4.2L43.6 35.6Q46 41.6 40.4 42H5.6Q0 41.6 2.4 35.6Z" />
      <path d="M23 15v12" strokeWidth="3" />
      <circle cx="23" cy="33" r="2.2" fill="#cbcbcb" stroke="none" />
    </svg>
  );
}

function GearIcon() {
  return (
    <svg width="49" height="48" viewBox="0 0 48 48" fill="none" stroke="#cbcbcb">
      <circle cx="24" cy="24" r="19" strokeWidth="2.8" />
      <circle cx="24" cy="24" r="22" strokeWidth="3.6" strokeDasharray="3.1 4.58" strokeDashoffset="1.55" pathLength="138.24" />
      <circle cx="24" cy="24" r="4.4" strokeWidth="2.6" />
      <path d="M29 24h14M21.5 19.7L14.5 7.6M21.5 28.3l-7 12.1" strokeWidth="2.6" />
    </svg>
  );
}

function StatusIcons() {
  return (
    <>
      <svg width="19" height="18" viewBox="0 0 19 18">
        <path d="M.6 8.4L17.4.4Q19 0 18.5 1.6L10.6 17.2Q9.6 18.6 9.2 17V9.6H1.2Q-.6 9.2.6 8.4Z" />
      </svg>
      <svg width="28" height="20" viewBox="0 0 28 20" fill="none" stroke="#000" strokeWidth="3.6">
        <path d="M1.5 7.2Q7 2 14 2t12.5 5.2M6.2 12Q9.5 8.8 14 8.8T21.8 12" />
        <path d="M9.8 15.6Q14 12 18.2 15.6L14 20Z" fill="#000" stroke="none" />
      </svg>
    </>
  );
}

function BatteryIcon() {
  return (
    <svg width="53" height="24" viewBox="0 0 53 24">
      <rect x="1" y="1" width="46" height="22" rx="6.5" fill="none" stroke="#868686" strokeWidth="2" />
      <rect x="4" y="4" width="40" height="16" rx="4" />
      <path d="M49.5 8Q52.5 9 52.5 12T49.5 16Z" fill="#868686" />
    </svg>
  );
}

/* ---------- screen ---------- */

export default function App() {
  return (
    <Page>
      <GlobalStyle />
      <StatusBar>
        <StatusGroup $gap={22}>
          <span>10:57 AM</span>
          <span>Wed Sep 27</span>
        </StatusGroup>
        <StatusGroup $gap={9}>
          <StatusIcons />
          <StatusGroup $gap={5}>
            <span>100%</span>
            <BatteryIcon />
          </StatusGroup>
        </StatusGroup>
      </StatusBar>
      <Tracker>
        <TitleBar>
          <Title>TAK Tracker</Title>
          <IconButton type="button" aria-label="Alerts"><WarningIcon /></IconButton>
          <IconButton type="button" aria-label="Open settings"><GearIcon /></IconButton>
        </TitleBar>
        <CallSign>TRACKER-3A343843</CallSign>
        <LocationPanel>
          <PanelLabel>Location (DMS)</PanelLabel>
          <Coordinates>
            <Column>
              <Reading>N</Reading>
              <Reading>W</Reading>
            </Column>
            <Column $centered>
              <Reading>37° 19' 56.393"</Reading>
              <Reading>122° 01' 50.287"</Reading>
            </Column>
          </Coordinates>
        </LocationPanel>
        <StatsPanel>
          <Column>
            <PanelLabel>Heading</PanelLabel>
            <Reading>2</Reading>
          </Column>
        </StatsPanel>
        <MapFrame>
          <MapView />
          <MapBrand><FaApple size={24} /><span>Maps</span></MapBrand>
          <LegalLink href="#legal">Legal</LegalLink>
        </MapFrame>
        <Footer>Server: Disconnected</Footer>
      </Tracker>
      <HomeArea><HomeIndicator /></HomeArea>
      <Settings />
    </Page>
  );
}
